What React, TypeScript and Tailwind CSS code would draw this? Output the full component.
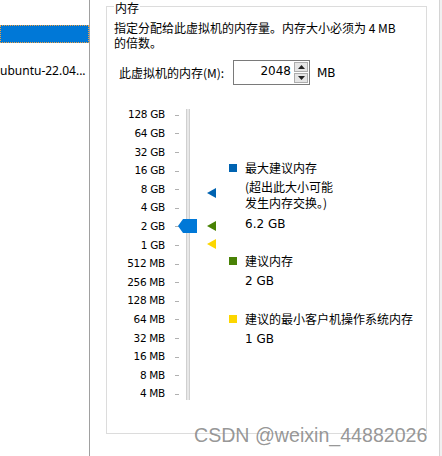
import React from "react";

const labels = [
  "128 GB","64 GB","32 GB","16 GB","8 GB","4 GB","2 GB","1 GB",
  "512 MB","256 MB","128 MB","64 MB","32 MB","16 MB","8 MB","4 MB",
];

const cjk = { fontFamily: '"Noto Sans CJK SC", "Microsoft YaHei", sans-serif' };
const tah = { fontFamily: '"DejaVu Sans", "Liberation Sans", sans-serif' };

function Marker({ color, top }: { color: string; top: number }) {
  return (
    <svg className="absolute left-[100px]" style={{ top }} width="9" height="10" viewBox="0 0 9 10">
      <polygon points="0,5 9,0 9,10" fill={color} />
    </svg>
  );
}

export default function App() {
  return (
    <div className="relative flex h-[456px] w-[442px] overflow-hidden bg-white text-[#000]" style={cjk}>
      {/* left tree panel */}
      <div className="relative w-[90px] shrink-0 border-r border-[#a0a0a0]">
        <div className="mt-[25px] h-[18px] w-[89px] border border-dotted border-[#f0a040] bg-[#0078d7]" />
        <div className="mt-[20px] whitespace-nowrap text-[12px] leading-[16px]" style={{ fontFamily: '"Noto Sans", sans-serif' }}>
          ubuntu-22.04...
        </div>
      </div>

      {/* main area */}
      <div className="relative w-[349px] shrink-0">
        <div className="relative ml-[16px] mt-[6px] h-[428px] w-[321px] border border-[#dcdcdc]">
          <div className="absolute left-[7px] top-[-7px] bg-white px-[1px] text-[12px] leading-[15px]">内存</div>

          <div className="flex flex-col pl-[7px] pt-[13px] text-[12px] leading-[15px]">
            <div>指定分配给此虚拟机的内存量。内存大小必须为 4 MB</div>
            <div>的倍数。</div>
          </div>

          <div className="mt-[10px] flex items-center pl-[12px]">
            <span className="w-[114px] text-[12px] leading-[16px]">此虚拟机的内存(M):</span>
            <div className="flex h-[25px] w-[77px] border border-[#7a7a7a]">
              <div className="flex-1 pr-[2px] pt-[3px] text-right text-[12px] leading-[14px]" style={tah}>2048</div>
              <div className="flex w-[16px] flex-col gap-[1px] p-[1px]">
                <div className="flex flex-1 items-center justify-center border border-[#adadad] bg-[#e5e5e5]">
                  <svg width="7" height="4" viewBox="0 0 7 4"><polygon points="0,4 3.5,0 7,4" fill="#222" /></svg>
                </div>
                <div className="flex flex-1 items-center justify-center border border-[#adadad] bg-[#e5e5e5]">
                  <svg width="7" height="4" viewBox="0 0 7 4"><polygon points="0,0 7,0 3.5,4" fill="#222" /></svg>
                </div>
              </div>
            </div>
            <span className="ml-[7px] text-[12px]" style={tah}>MB</span>
          </div>

          {/* slider area */}
          <div className="relative mt-[21px] flex">
            <div className="flex w-[58px] flex-col" style={tah}>
              {labels.map((l) => (
                <div key={l} className="flex h-[18.6px] items-center justify-end text-[10.5px] tracking-[-0.3px]">
                  {l}
                </div>
              ))}
            </div>
            <div className="flex w-[14px] flex-col">
              {labels.map((l) => (
                <div key={l} className="flex h-[18.6px] items-center justify-end">
                  <div className="h-[1px] w-[4px] bg-[#b0b0b0]" />
                </div>
              ))}
            </div>
            <div className="ml-[7px] mt-[3px] h-[291px] w-[4px] border-x border-[#d0d0d0] bg-[#e8e8e8]" />

            <svg className="absolute left-[71px] top-[113px]" width="19" height="14" viewBox="0 0 19 14">
              <polygon points="0,7 5,0 19,0 19,14 5,14" fill="#0078d7" />
            </svg>
            <Marker color="#0063b1" top={82} />
            <Marker color="#498205" top={115} />
            <Marker color="#fcd600" top={133} />

            {/* legend */}
            <div className="ml-[39px] flex flex-col text-[12px] leading-[16px]">
              <div className="mt-[54px] flex items-center">
                <div className="mr-[8px] h-[8px] w-[8px] bg-[#0063b1]" />
                <span>最大建议内存</span>
              </div>
              <div className="ml-[16px] mt-[3px]">(超出此大小可能</div>
              <div className="ml-[16px]">发生内存交换。)</div>
              <div className="ml-[16px] mt-[5px]" style={tah}>6.2 GB</div>

              <div className="mt-[21px] flex items-center">
                <div className="mr-[8px] h-[8px] w-[8px] bg-[#498205]" />
                <span>建议内存</span>
              </div>
              <div className="ml-[16px] mt-[4px]" style={tah}>2 GB</div>

              <div className="mt-[22px] flex items-center">
                <div className="mr-[8px] h-[8px] w-[8px] bg-[#fcd600]" />
                <span className="whitespace-nowrap">建议的最小客户机操作系统内存</span>
              </div>
              <div className="ml-[16px] mt-[4px]" style={tah}>1 GB</div>
            </div>
          </div>
        </div>
      </div>

      {/* right edge */}
      <div className="w-[3px] shrink-0 border-l border-[#d4d4d4] bg-[#f0f0f0]" />

      {/* watermark */}
      <div
        className="pointer-events-none absolute left-[194px] top-[424px] whitespace-nowrap text-[19.6px] leading-[22px] text-[#8a8a8a]/90"
        style={{ fontFamily: '"Liberation Sans", Arial, sans-serif' }}
      >
        CSDN @weixin_44882026
      </div>
    </div>
  );
}
